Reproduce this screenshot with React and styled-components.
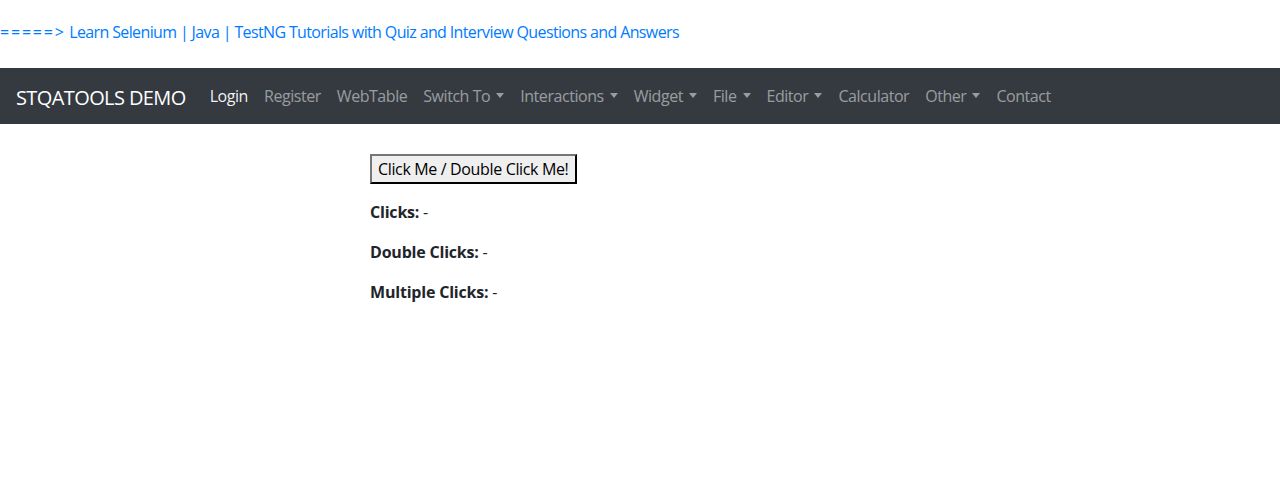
import React from "react";
import styled, { createGlobalStyle } from "styled-components";

const Global = createGlobalStyle`
  html, body { margin: 0; padding: 0; background: #fff; }
  body {
    font-family: "Open Sans", "Noto Sans", sans-serif;
    font-size: 16px;
    line-height: 24px;
    color: #212529;
  }
`;

const TopBar = styled.div`
  padding: 20px 0 24px 0;
  height: 24px;
`;

const TopLink = styled.a`
  color: #007bff;
  text-decoration: none;
  font-size: 16px;
  letter-spacing: -0.63px;
`;

const Arrow = styled.span`
  letter-spacing: 1.8px;
`;

const Navbar = styled.nav`
  background: #343a40;
  height: 56px;
  box-sizing: border-box;
  padding: 8px 16px;
  display: flex;
  align-items: center;
`;

const Brand = styled.a`
  color: #fff;
  font-size: 20px;
  line-height: 30px;
  margin-right: 16px;
  letter-spacing: -0.6px;
  text-decoration: none;
  padding-top: 4px;
`;

const NavList = styled.ul`
  display: flex;
  list-style: none;
  margin: 0;
  padding: 0;
  align-items: center;
`;

const NavLink = styled.a`
  display: block;
  padding: 8px 8px;
  font-size: 16px;
  letter-spacing: -0.45px;
  color: ${(p) => (p.$active ? "rgba(255,255,255,0.95)" : "rgba(255,255,255,0.5)")};
  text-decoration: none;
  white-space: nowrap;
`;

const Caret = styled.span`
  display: inline-block;
  margin-left: 6px;
  vertical-align: 4px;
  border-top: 5px solid currentColor;
  border-left: 4.5px solid transparent;
  border-right: 4.5px solid transparent;
`;

const Main = styled.main`
  padding: 30px 0 0 370px;
`;

const ClickButton = styled.button`
  font-family: inherit;
  font-size: 16px;
  letter-spacing: -0.35px;
  line-height: 22px;
  height: 30px;
  padding: 1px 6px;
  background: #efefef;
  color: #000;
  border: 2px solid;
  border-color: #767676 #000 #000 #767676;
  border-radius: 0;
  margin-bottom: 16px;
`;

const Stat = styled.p`
  margin: 0 0 16px 0;
  font-size: 16px;
  letter-spacing: -0.3px;
`;

const Label = styled.b`
  font-weight: 700;
  letter-spacing: -0.2px;
`;

const items = [
  { label: "Login", active: true },
  { label: "Register" },
  { label: "WebTable" },
  { label: "Switch To", drop: true },
  { label: "Interactions", drop: true },
  { label: "Widget", drop: true },
  { label: "File", drop: true },
  { label: "Editor", drop: true },
  { label: "Calculator" },
  { label: "Other", drop: true },
  { label: "Contact" },
];

export default function App() {
  return (
    <>
      <Global />
      <TopBar>
        <TopLink href="#">
          <Arrow>=====&gt;</Arrow> Learn Selenium | Java | TestNG Tutorials with Quiz and Interview Questions and Answers
        </TopLink>
      </TopBar>
      <Navbar>
        <Brand href="#">STQATOOLS DEMO</Brand>
        <NavList>
          {items.map((it) => (
            <li key={it.label}>
              <NavLink href="#" $active={it.active}>
                {it.label}
                {it.drop && <Caret />}
              </NavLink>
            </li>
          ))}
        </NavList>
      </Navbar>
      <Main>
        <ClickButton>Click Me / Double Click Me!</ClickButton>
        <Stat>
          <Label>Clicks:</Label> -
        </Stat>
        <Stat>
          <Label>Double Clicks:</Label> -
        </Stat>
        <Stat>
          <Label>Multiple Clicks:</Label> -
        </Stat>
      </Main>
    </>
  );
}
